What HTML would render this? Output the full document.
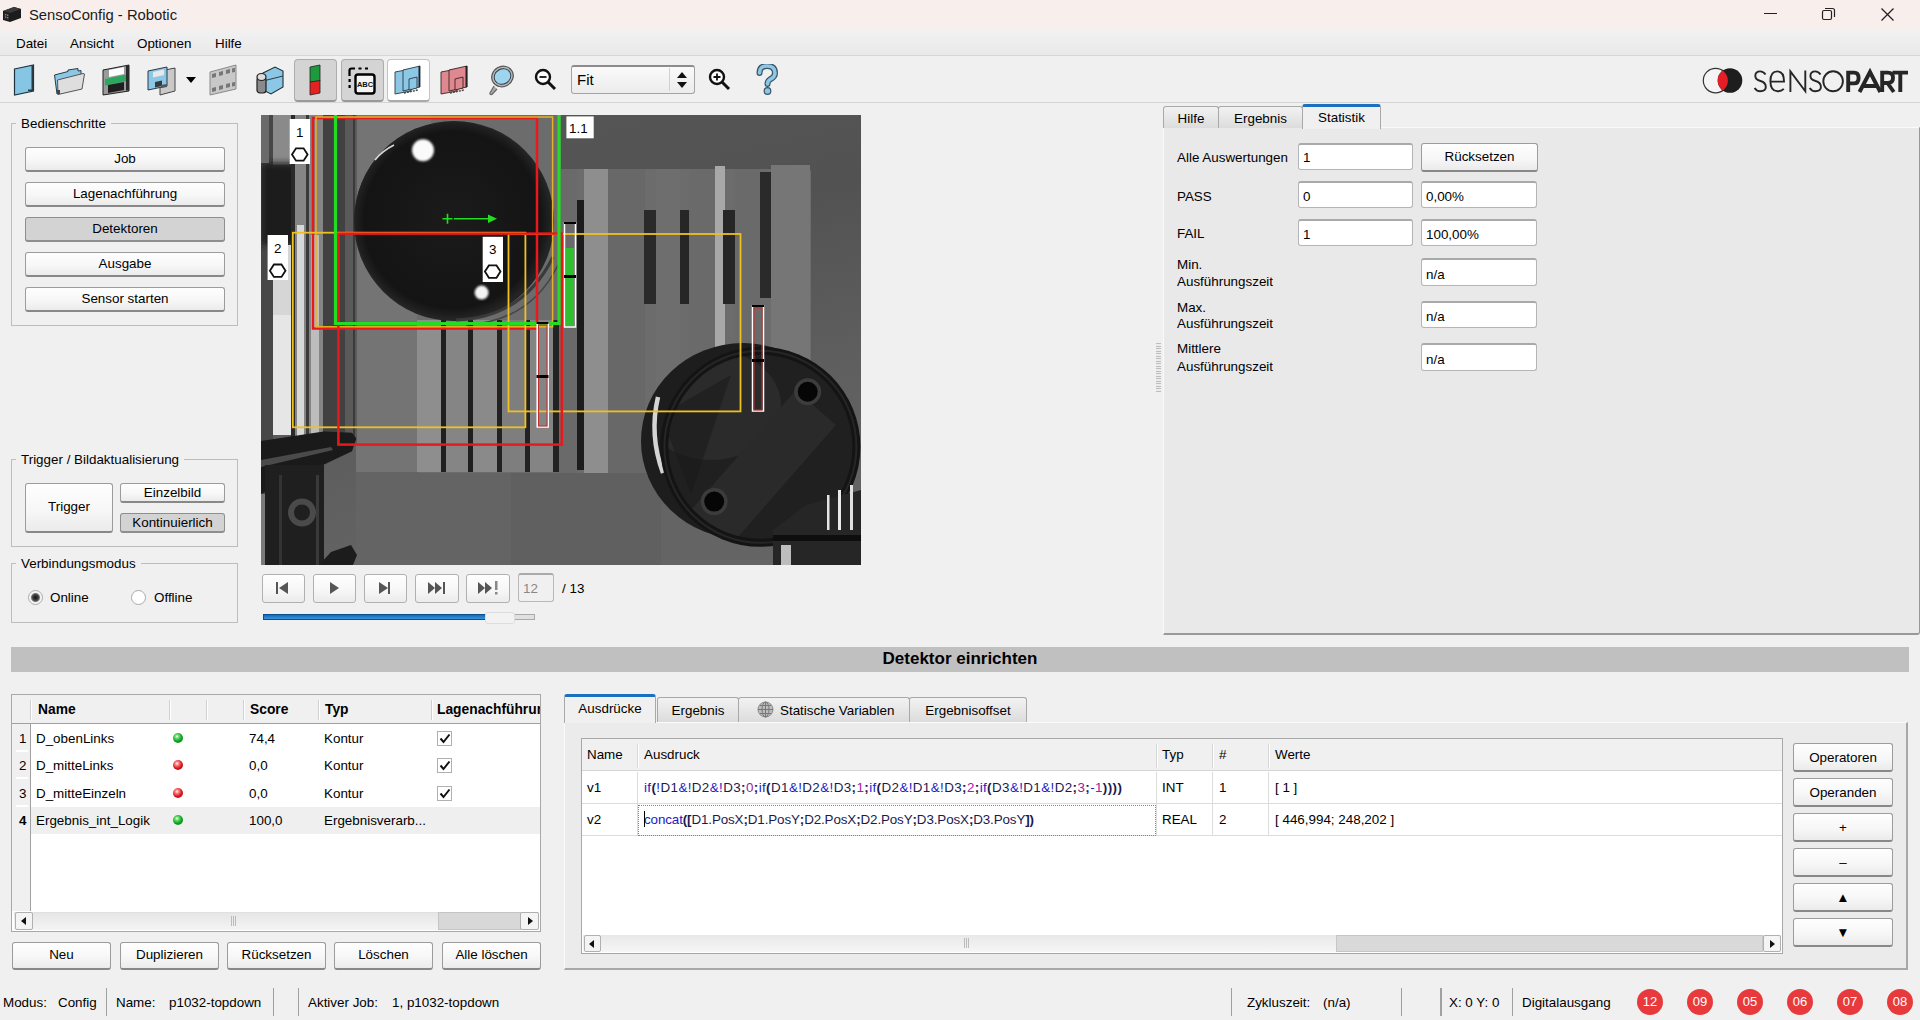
<!DOCTYPE html>
<html><head><meta charset="utf-8">
<style>
*{margin:0;padding:0;box-sizing:border-box}
html,body{width:1920px;height:1020px;overflow:hidden;background:#f0f0f0;font-family:"Liberation Sans",sans-serif;font-size:13.4px;color:#000;position:relative}
.a{position:absolute}
.t{position:absolute;white-space:nowrap;line-height:16px}
.btn{position:absolute;border:1px solid #9c9c9c;border-bottom:2px solid #888;border-radius:3px;background:linear-gradient(#fefefe,#f7f7f7 55%,#ebebeb);text-align:center;white-space:nowrap;line-height:16px}
.btn.p{background:#d3d3d3;border-color:#8e8e8e}
.grp{position:absolute;border:1px solid #bdbdbd}
.grp>.gt{position:absolute;top:-8px;left:4px;background:#f0f0f0;padding:0 5px;line-height:16px;white-space:nowrap}
.inp{position:absolute;background:#fff;border:1px solid #b5b5b5;border-top:2px solid #a9a9a9;border-radius:3px;line-height:16px;padding-left:4px;white-space:nowrap}
.tab{position:absolute;border:1px solid #a8a8a8;border-bottom:none;border-radius:3px 3px 0 0;background:linear-gradient(#f2f2f2,#dcdcdc);text-align:center;white-space:nowrap;line-height:16px}
.vsep{position:absolute;width:1px;background:#d8d8d8}
</style></head><body>

<!-- title bar -->
<div class="a" style="left:0;top:0;width:1920px;height:29px;background:#f8efed"></div>
<svg class="a" style="left:2px;top:5px" width="20" height="18" viewBox="0 0 20 18"><polygon points="1,6 12,2 19,4 19,13 8,17 1,15" fill="#1c1c1c"/><polygon points="1,6 12,2 19,4 8,8" fill="#3a3a3a"/><polygon points="2,7.5 7,9 7,15.5 2,14" fill="#2a2a2a"/><g fill="#8a8a8a"><rect x="3" y="9" width="1.3" height="1.3"/><rect x="5" y="9.6" width="1.3" height="1.3"/><rect x="3" y="11.5" width="1.3" height="1.3"/><rect x="5" y="12" width="1.3" height="1.3"/></g></svg>
<div class="t" style="left:29px;top:6px;font-size:14.8px;line-height:18px;color:#1a1a1a">SensoConfig - Robotic</div>
<div class="a" style="left:1764px;top:13px;width:13px;height:1px;background:#222"></div>
<svg class="a" style="left:1821px;top:7px" width="15" height="14" viewBox="0 0 15 14"><rect x="1.5" y="3.5" width="9" height="9" rx="1.5" fill="none" stroke="#222" stroke-width="1.2"/><path d="M4 1.5 H11.5 Q13.5 1.5 13.5 3.5 V10" fill="none" stroke="#222" stroke-width="1.2"/></svg>
<svg class="a" style="left:1880px;top:7px" width="15" height="15" viewBox="0 0 15 15"><path d="M1.5 1.5 L13.5 13.5 M13.5 1.5 L1.5 13.5" stroke="#222" stroke-width="1.3"/></svg>

<!-- menu bar -->
<div class="a" style="left:0;top:29px;width:1920px;height:26px;background:linear-gradient(#f2f2f2,#e9e9e9)"></div>
<div class="a" style="left:0;top:55px;width:1920px;height:1px;background:#d6d6d6"></div>
<div class="t" style="left:16px;top:36px">Datei</div>
<div class="t" style="left:70px;top:36px">Ansicht</div>
<div class="t" style="left:137px;top:36px">Optionen</div>
<div class="t" style="left:215px;top:36px">Hilfe</div>

<!-- toolbar -->
<div class="a" style="left:0;top:56px;width:1920px;height:46px;background:#f0f0f0"></div>
<div class="a" style="left:0;top:102px;width:1920px;height:1px;background:#d4d4d4"></div>

<!-- 1 new -->
<svg class="a" style="left:13px;top:64px" width="22" height="32" viewBox="0 0 22 32"><polygon points="1.5,5 20.5,1 20.5,27 1.5,31" fill="#86c5e4" stroke="#1e3440" stroke-width="1.2"/><rect x="18.5" y="1.5" width="2" height="25.5" fill="#2a3a44"/><rect x="15" y="25.5" width="4" height="1.5" fill="#2a3a44"/></svg>
<!-- 2 open -->
<svg class="a" style="left:53px;top:68px" width="33" height="27" viewBox="0 0 33 27"><polygon points="1.5,7 15,3.5 15,2 25,0.5 25,3 28,2.5 28,20 4,26" fill="#8cc8e6" stroke="#2a3a44" stroke-width="1"/><polygon points="4.5,12 30,5.5 31.5,6 29,21 5,26.5" fill="#dedede" stroke="#555" stroke-width="1"/><rect x="4" y="22" width="3" height="4" fill="#444"/></svg>
<!-- 3 save green -->
<svg class="a" style="left:102px;top:64px" width="28" height="32" viewBox="0 0 28 32"><polygon points="1,6 27,1 27,27 1,31" fill="#9a9a9a" stroke="#222" stroke-width="1"/><polygon points="7,6 22,3 22,10 7,13" fill="#fff"/><polygon points="3,15 25,10.5 25,17 3,21.5" fill="#2aa860"/><polygon points="6,21 22,18 22,26 6,29" fill="#1f1f1f"/><rect x="24" y="1.5" width="3" height="25" fill="#2a2a2a"/></svg>
<!-- 4 save blue + dropdown -->
<svg class="a" style="left:147px;top:64px" width="31" height="32" viewBox="0 0 31 32"><polygon points="13,7 28,4 28,27 13,31" fill="#c9c9c9" stroke="#444" stroke-width="1"/><polygon points="1,7 20,3 20,22 1,26" fill="#8cc8e6" stroke="#2a3a44" stroke-width="1"/><polygon points="6,8 17,5.5 17,11 6,13.5" fill="#e8e8e8"/><polygon points="8,18 15,16.5 15,22 8,23.5" fill="#3a3a3a"/><polygon points="14,21 20,20 20,23 14,24" fill="#555"/></svg>
<svg class="a" style="left:185px;top:76px" width="12" height="8"><polygon points="1,1 11,1 6,7" fill="#000"/></svg>
<!-- 5 film -->
<svg class="a" style="left:209px;top:64px" width="29" height="32" viewBox="0 0 29 32"><polygon points="1,8 27,1 27,25 1,31" fill="#c8c8c8" stroke="#8a8a8a" stroke-width="1"/><g fill="#777"><polygon points="3,10 7,9 7,13 3,14"/><polygon points="10,8 14,7 14,11 10,12"/><polygon points="17,6 21,5 21,9 17,10"/><polygon points="23,4.5 26,3.8 26,8 23,8.6"/><polygon points="3,24 7,23 7,27 3,28"/><polygon points="10,22 14,21 14,25 10,26"/><polygon points="17,20 21,19 21,23 17,24"/><polygon points="23,18.5 26,18 26,22 23,22.6"/></g></svg>
<!-- 6 camera -->
<svg class="a" style="left:255px;top:64px" width="30" height="32" viewBox="0 0 30 32"><polygon points="8,9 20,3 28,7 28,23 16,30 8,26" fill="#8cc8e6" stroke="#1e2e38" stroke-width="1.1"/><path d="M8 17 L28 12" stroke="#2a3a44" stroke-width="1"/><rect x="2" y="13" width="9" height="16" rx="3" fill="#8a8a8a" stroke="#1f1f1f" stroke-width="1.2"/><ellipse cx="6.5" cy="13" rx="4.5" ry="3.5" fill="#ddd" stroke="#1f1f1f" stroke-width="1.2"/></svg>
<!-- 7 pressed trigger -->
<div class="a" style="left:294px;top:59px;width:43px;height:43px;background:#d4d4d4;border:1px solid #adadad;border-bottom:2px solid #999;border-radius:4px"></div>
<svg class="a" style="left:308px;top:64px" width="14" height="32" viewBox="0 0 14 32"><polygon points="2,3 12,1 12,17 2,18" fill="#1e9a3e" stroke="#222" stroke-width="0.8"/><polygon points="2,18 12,16.5 12,29 2,31" fill="#e52222" stroke="#222" stroke-width="0.8"/></svg>
<!-- 8 pressed ABC -->
<div class="a" style="left:341px;top:59px;width:43px;height:43px;background:#d4d4d4;border:1px solid #adadad;border-bottom:2px solid #999;border-radius:4px"></div>
<svg class="a" style="left:347px;top:66px" width="30" height="30" viewBox="0 0 30 30"><path d="M2.5 10 V4.5 Q2.5 2.5 4.5 2.5 H8 M11.5 2.5 H14.5 M18 2.5 H21" stroke="#000" stroke-width="2.2" fill="none" stroke-dasharray="none"/><rect x="1.5" y="13" width="2.2" height="3" fill="#000"/><rect x="1.5" y="19" width="2.2" height="3" fill="#000"/><rect x="8.5" y="8.5" width="19" height="19" rx="2.5" fill="#f4f4f4" stroke="#000" stroke-width="2.4"/><text x="18" y="21" font-family="Liberation Sans" font-size="7.5" font-weight="bold" text-anchor="middle" fill="#111">ABC</text></svg>
<!-- 9 white raised -->
<div class="a" style="left:387px;top:59px;width:43px;height:43px;background:#fff;border:1px solid #c4c4c4;border-bottom:2px solid #aaa;border-radius:4px"></div>
<svg class="a" style="left:394px;top:64px" width="30" height="32" viewBox="0 0 30 32"><polygon points="1,8 17,5 17,27 1,30" fill="#8cc8e6" stroke="#2a3a44" stroke-width="0.9"/><polygon points="9,6 26,2 26,23 9,27" fill="#8cc8e6" stroke="#2a3a44" stroke-width="0.9"/><polygon points="15,15 23,13 23,24 15,26" fill="#8cc8e6" stroke="#2a3a44" stroke-width="0.9"/><rect x="24.5" y="2" width="1.5" height="21" fill="#223"/><path d="M10 29 L24 26" stroke="#444" stroke-width="1.5" stroke-dasharray="2 1"/></svg>
<!-- 10 pink -->
<svg class="a" style="left:440px;top:64px" width="30" height="32" viewBox="0 0 30 32"><polygon points="1,8 17,5 17,27 1,30" fill="#e08890" stroke="#3a2222" stroke-width="0.9"/><polygon points="9,6 27,2 27,23 9,27" fill="#e08890" stroke="#3a2222" stroke-width="0.9"/><polygon points="15,15 23,13 23,24 15,26" fill="#e08890" stroke="#3a2222" stroke-width="0.9"/><rect x="25.5" y="2" width="1.8" height="21" fill="#222"/><path d="M10 29 L24 26" stroke="#444" stroke-width="1.5" stroke-dasharray="2 1"/></svg>
<!-- 11 lens -->
<svg class="a" style="left:487px;top:64px" width="28" height="32" viewBox="0 0 28 32"><path d="M7 22 L3 29 Q2.5 31 5 30.5 L10 25" fill="#aaa" stroke="#666" stroke-width="1.2"/><ellipse cx="15.5" cy="12.5" rx="11" ry="10" transform="rotate(-30 15.5 12.5)" fill="#b8b8b8" stroke="#555" stroke-width="1.2"/><ellipse cx="15.5" cy="12.5" rx="8.5" ry="7.5" transform="rotate(-30 15.5 12.5)" fill="#9fd4ee" stroke="#2a3a44" stroke-width="0.9"/></svg>
<!-- 12 zoom out -->
<svg class="a" style="left:534px;top:68px" width="24" height="24" viewBox="0 0 24 24"><circle cx="9" cy="9" r="7" fill="#fff" stroke="#111" stroke-width="2.4"/><path d="M5.5 9 H12.5" stroke="#111" stroke-width="1.8"/><path d="M14 14 L21 21" stroke="#111" stroke-width="3"/></svg>
<!-- 13 combo -->
<div class="a" style="left:571px;top:65px;width:124px;height:29px;border:1px solid #a4a4a4;border-top:2px solid #8c8c8c;border-radius:3px;background:linear-gradient(#fafafa,#ececec)"></div>
<div class="a" style="left:669px;top:68px;width:1px;height:23px;background:#d0d0d0"></div>
<div class="t" style="left:577px;top:72px;font-size:15px">Fit</div>
<svg class="a" style="left:676px;top:71px" width="12" height="18"><polygon points="6,1 11,7 1,7" fill="#111"/><polygon points="1,11 11,11 6,17" fill="#111"/></svg>
<!-- 14 zoom in -->
<svg class="a" style="left:708px;top:68px" width="24" height="24" viewBox="0 0 24 24"><circle cx="9" cy="9" r="7" fill="#fff" stroke="#111" stroke-width="2.4"/><path d="M5.5 9 H12.5 M9 5.5 V12.5" stroke="#111" stroke-width="1.8"/><path d="M14 14 L21 21" stroke="#111" stroke-width="3"/></svg>
<!-- 15 help -->
<svg class="a" style="left:756px;top:64px" width="22" height="32" viewBox="0 0 22 32"><path d="M3.5 9 Q3.5 2 11 2 Q19 2 19 9 Q19 13 14 15.5 Q11.5 17 11.5 20" fill="none" stroke="#3a5566" stroke-width="6" stroke-linecap="round"/><path d="M3.5 9 Q3.5 2 11 2 Q19 2 19 9 Q19 13 14 15.5 Q11.5 17 11.5 20" fill="none" stroke="#8cc8e6" stroke-width="3.6" stroke-linecap="round"/><circle cx="11.5" cy="27" r="3.3" fill="#8cc8e6" stroke="#3a5566" stroke-width="1.2"/></svg>


<!-- logo -->

<svg class="a" style="left:1700px;top:62px" width="212" height="36" viewBox="0 0 212 36">
 <defs><clipPath id="lc"><circle cx="30" cy="18.5" r="12.3"/></clipPath></defs>
 <circle cx="15.6" cy="18.6" r="12.3" fill="#f4f4f4" stroke="#333" stroke-width="1.2"/>
 <circle cx="30" cy="18.5" r="12.3" fill="#1e1e1e"/>
 <circle cx="15.6" cy="18.6" r="12.3" fill="#e41e26" clip-path="url(#lc)"/>
 <g fill="none" stroke="#262626" stroke-width="1.9" stroke-linecap="butt">
  <path d="M65.5 12.5 Q63.5 9.4 60.2 9.4 Q55.3 9.4 55.3 14 Q55.3 17.6 60.5 19 Q65.8 20.4 65.8 25 Q65.8 29.2 60.2 29.2 Q56.4 29.2 54.6 26"/>
  <path d="M70.7 19.6 H84 Q84 9.4 77.3 9.4 Q70.4 9.4 70.4 19.3 Q70.4 29.2 77.6 29.2 Q81.4 29.2 83.8 26.8"/>
  <path d="M90.4 30 V9.4 L105.3 29.2 V8.6"/>
  <path d="M120.5 12.5 Q118.5 9.4 115.3 9.4 Q110.4 9.4 110.4 14 Q110.4 17.6 115.6 19 Q120.9 20.4 120.9 25 Q120.9 29.2 115.3 29.2 Q111.5 29.2 109.7 26"/>
  <ellipse cx="133.1" cy="19.3" rx="9.8" ry="10"/>
 </g>
 <g fill="none" stroke="#262626" stroke-width="3.9" stroke-linecap="butt" stroke-linejoin="miter">
  <path d="M148.2 30 V10.6 H154 Q158.6 10.6 158.6 16 Q158.6 21.4 154 21.4 H148.2"/>
  <path d="M159.5 30 L170 10 L180.3 30 M164 24 H176"/>
  <path d="M182.2 30 V10.6 H187.8 Q193 10.6 193 15.8 Q193 21 187.8 21 H182.2 M187.5 21 L193.8 30"/>
  <path d="M192.5 10.6 H208 M200.3 10.6 V30"/>
 </g>
</svg>


<!-- left panel -->
<div class="grp" style="left:11px;top:123px;width:227px;height:203px"><div class="gt">Bedienschritte</div></div>
<div class="btn" style="left:25px;top:147px;width:200px;height:25px;line-height:21px">Job</div>
<div class="btn" style="left:25px;top:182px;width:200px;height:25px;line-height:21px">Lagenachführung</div>
<div class="btn p" style="left:25px;top:217px;width:200px;height:25px;line-height:21px">Detektoren</div>
<div class="btn" style="left:25px;top:252px;width:200px;height:25px;line-height:21px">Ausgabe</div>
<div class="btn" style="left:25px;top:287px;width:200px;height:25px;line-height:21px">Sensor starten</div>

<div class="grp" style="left:11px;top:459px;width:227px;height:88px"><div class="gt">Trigger / Bildaktualisierung</div></div>
<div class="btn" style="left:25px;top:483px;width:88px;height:50px;line-height:46px">Trigger</div>
<div class="btn" style="left:120px;top:483px;width:105px;height:20px;line-height:17px">Einzelbild</div>
<div class="btn p" style="left:120px;top:513px;width:105px;height:20px;line-height:17px">Kontinuierlich</div>

<div class="grp" style="left:11px;top:563px;width:227px;height:60px"><div class="gt">Verbindungsmodus</div></div>
<div class="a" style="left:28px;top:590px;width:15px;height:15px;border-radius:50%;border:1px solid #aaa;background:radial-gradient(circle at 50% 50%,#111 0,#444 3px,#777 4px,#eee 5px,#fff 7px)"></div>
<div class="t" style="left:50px;top:590px">Online</div>
<div class="a" style="left:131px;top:590px;width:15px;height:15px;border-radius:50%;border:1px solid #aaa;background:#fff"></div>
<div class="t" style="left:154px;top:590px">Offline</div>

<!-- image -->
<svg class="a" style="left:261px;top:115px" width="600" height="450" viewBox="0 0 600 450">
<defs>
 <linearGradient id="bgG" x1="0" y1="0" x2="0.3" y2="1"><stop offset="0" stop-color="#575757"/><stop offset="0.4" stop-color="#525252"/><stop offset="0.75" stop-color="#5e5e5e"/><stop offset="1" stop-color="#646464"/></linearGradient>
 <radialGradient id="barT" cx="0.5" cy="0.5" r="0.5"><stop offset="0" stop-color="#1b1b1b"/><stop offset="0.9" stop-color="#141414"/><stop offset="1" stop-color="#222"/></radialGradient>
 <linearGradient id="brB" x1="0" y1="0" x2="1" y2="1"><stop offset="0" stop-color="#2a2a2a"/><stop offset="1" stop-color="#202020"/></linearGradient>
 <filter id="blur1"><feGaussianBlur stdDeviation="1.2"/></filter>
 <filter id="blur3"><feGaussianBlur stdDeviation="3"/></filter>
</defs>
<rect width="600" height="450" fill="url(#bgG)"/>
<!-- floor lighter area bottom middle -->
<rect x="95" y="357" width="155" height="93" fill="#646464"/>
<rect x="250" y="357" width="150" height="93" fill="#606060"/>
<!-- area left of barrel, lighter wall -->
<rect x="95" y="0" width="80" height="357" fill="#747474"/>
<rect x="170" y="0" width="130" height="60" fill="#6c6c6c"/>
<rect x="84" y="0" width="12" height="330" fill="#5a5a5a"/>
<rect x="92" y="0" width="2" height="330" fill="#3a3a3a"/>
<!-- left structure -->
<rect x="0" y="0" width="12" height="450" fill="#474747"/>
<rect x="12" y="0" width="18" height="50" fill="#8a8a8a"/>
<rect x="0" y="48" width="44" height="82" fill="#1d1d1d" filter="url(#blur3)"/>
<rect x="12" y="130" width="18" height="190" fill="#d6d6d6"/>
<rect x="12" y="200" width="18" height="120" fill="#e6e6e6"/>
<rect x="30" y="0" width="32" height="325" fill="#858585"/>
<rect x="30" y="0" width="4" height="325" fill="#2a2a2a"/>
<rect x="36" y="110" width="7" height="215" fill="#d8d8d8"/>
<rect x="45" y="0" width="3" height="325" fill="#3a3a3a"/>
<rect x="50" y="120" width="8" height="205" fill="#bdbdbd"/>
<rect x="0" y="0" width="8" height="48" fill="#6a6a6a"/>
<rect x="62" y="0" width="22" height="330" fill="#414141"/>
<!-- beam and machinery bottom left -->
<polygon points="0,326 62.6,316.4 91,317.8 95.3,323.5 91,336.3 61,350.5 0,379" fill="#1a1a1a"/>
<polygon points="0,345 70,332 72,335 0,352" fill="#4a4a4a"/>
<rect x="4" y="350" width="59" height="100" fill="#1f1f1f"/>
<rect x="0" y="379" width="4" height="71" fill="#7a7a7a"/>
<circle cx="41" cy="397.5" r="11" fill="none" stroke="#4a4a4a" stroke-width="6"/>
<rect x="18" y="360" width="3" height="90" fill="#333"/>
<rect x="55" y="360" width="3" height="90" fill="#3a3a3a"/>
<polygon points="58,450 70,437 90,430 96,440 92,450" fill="#1c1c1c"/>
<!-- pallet -->
<g>
 <rect x="156" y="54" width="394" height="304" rx="3" fill="#6c6c6c"/>
 <rect x="156" y="205" width="24" height="152" fill="#8e8e8e"/>
 <rect x="180" y="205" width="5" height="152" fill="#1f1f1f"/>
 <rect x="185" y="205" width="22" height="152" fill="#858585"/>
 <rect x="207" y="205" width="5" height="152" fill="#1f1f1f"/>
 <rect x="212" y="205" width="24" height="152" fill="#8a8a8a"/>
 <rect x="236" y="205" width="5" height="152" fill="#222"/>
 <rect x="241" y="205" width="23" height="152" fill="#7e7e7e"/>
 <rect x="264" y="205" width="5" height="152" fill="#222"/>
 <rect x="269" y="205" width="24" height="152" fill="#848484"/>
 <rect x="292" y="205" width="6" height="152" fill="#222"/>
 <rect x="298" y="54" width="18" height="304" fill="#6a6a6a"/>
 <rect x="316" y="85" width="7" height="270" fill="#1c1c1c"/>
 <rect x="323" y="54" width="24" height="304" fill="#8e8e8e"/>
 <rect x="347" y="54" width="37" height="304" fill="#686868"/>
 <rect x="383" y="95" width="12" height="94" fill="#2a2a2a"/>
 <rect x="395" y="54" width="24" height="304" fill="#6e6e6e"/>
 <rect x="419" y="95" width="9" height="94" fill="#262626"/>
 <rect x="428" y="54" width="26" height="304" fill="#6a6a6a"/>
 <rect x="454" y="51" width="10" height="250" fill="#a8a8a8"/>
 <rect x="462" y="95" width="12" height="94" fill="#262626"/>
 <rect x="474" y="54" width="25" height="304" fill="#6a6a6a"/>
 <rect x="499" y="57" width="11" height="126" fill="#2a2a2a"/>
 <rect x="510" y="50" width="39" height="300" fill="#767676"/>
</g>
<!-- top barrel -->
<ellipse cx="193" cy="106" rx="100" ry="100" fill="#242424"/>
<circle cx="191.5" cy="104.8" r="98" fill="url(#barT)"/>
<path d="M114 45 Q121 36 133 30" stroke="#d8d8d8" stroke-width="1.6" fill="none"/>
<path d="M195 205 Q262 203 292 142" stroke="#3a3a3a" stroke-width="3" fill="none"/><path d="M205 210 Q270 206 297 150" stroke="#444" stroke-width="1.5" fill="none"/>
<circle cx="162" cy="35.3" r="11" fill="#fafafa" filter="url(#blur1)"/>
<circle cx="220.6" cy="177.6" r="7" fill="#f4f4f4" filter="url(#blur1)"/>
<!-- bottom right barrel -->
<clipPath id="lidClip"><circle cx="499.4" cy="331.8" r="92"/></clipPath>
<ellipse cx="482" cy="326" rx="102" ry="98" fill="#1d1d1d"/>
<path d="M397 282 Q388 320 402 358" stroke="#d4d4d4" stroke-width="4.5" fill="none"/>
<circle cx="499.4" cy="331.8" r="100" fill="#141414"/>
<circle cx="499.4" cy="331.8" r="96" fill="none" stroke="#262626" stroke-width="2"/>
<circle cx="499.4" cy="331.8" r="92" fill="#202020"/>
<g clip-path="url(#lidClip)">
 <ellipse cx="450" cy="290" rx="70" ry="55" fill="#2b2b2b"/>
 <polygon points="430,395 535,275 575,310 470,430" fill="#2a2a2a"/>
 <polygon points="400,300 470,260 430,380" fill="#1a1a1a" opacity="0.6"/>
</g>
<circle cx="546.7" cy="276.7" r="13.5" fill="#3c3c3c"/><circle cx="546.7" cy="276.7" r="10" fill="#060606"/>
<circle cx="453.2" cy="386.6" r="13.5" fill="#3c3c3c"/><circle cx="453.2" cy="386.6" r="10" fill="#060606"/>
<!-- bottom right machinery -->
<polygon points="512,450 512,415 545,390 600,375 600,450" fill="#262626"/>
<rect x="566" y="380" width="2.5" height="35" fill="#e4e4e4"/>
<rect x="577" y="375" width="3" height="40" fill="#eaeaea"/>
<rect x="589" y="370" width="3" height="45" fill="#e0e0e0"/>
<rect x="512" y="420" width="88" height="6" fill="#0e0e0e"/>
<rect x="520" y="430" width="10" height="20" fill="#bdbdbd"/>
<!-- overlays -->
<g fill="none">
 <rect x="52" y="3" width="224" height="210.5" stroke="#e8191c" stroke-width="2.5"/>
 <rect x="55" y="2" width="236.6" height="209.8" stroke="#e4b224" stroke-width="1.5"/>
 <rect x="31.8" y="117.7" width="232.6" height="194.6" stroke="#f0c020" stroke-width="1.8"/>
 <rect x="247.5" y="119" width="232" height="177.4" stroke="#f0c020" stroke-width="1.8"/>
 <rect x="77.4" y="118.6" width="223.4" height="211" stroke="#e8191c" stroke-width="2.5"/>
 <path d="M74.5 0 V208.5 H298 V0" stroke="#22dd22" stroke-width="3.2"/>
</g>
<!-- probes -->
<rect x="303.5" y="108" width="11" height="104" fill="none" stroke="#fff" stroke-width="1.5"/>
<rect x="305" y="133" width="8" height="78" fill="#2fbf2f"/>
<rect x="303" y="107" width="12" height="2" fill="#000"/>
<rect x="303" y="160" width="12" height="3" fill="#000"/>
<rect x="276.2" y="208" width="11" height="104" fill="none" stroke="#fff" stroke-width="1.5"/>
<rect x="277.5" y="210" width="8.5" height="101" fill="none" stroke="#c03030" stroke-width="1"/>
<rect x="275.5" y="207" width="12" height="2" fill="#000"/>
<rect x="275.5" y="260" width="12" height="3" fill="#000"/>
<rect x="491.5" y="191" width="11" height="105" fill="none" stroke="#fff" stroke-width="1.5"/>
<rect x="493" y="193" width="8" height="102" fill="none" stroke="#c03030" stroke-width="1"/>
<rect x="491" y="190" width="12" height="2" fill="#000"/>
<rect x="491" y="244" width="12" height="3" fill="#000"/>
<!-- green arrow -->
<path d="M181.5 103.7 H191.5 M186.5 98.7 V108.7 M193 103.7 H229" stroke="#22dd22" stroke-width="1.6"/>
<polygon points="227,99.5 236,103.7 227,108" fill="#22dd22"/>
<!-- labels -->
<rect x="28.7" y="4" width="20.3" height="45" fill="#fff"/>
<rect x="6.6" y="120" width="20.4" height="45" fill="#fff"/>
<rect x="221.7" y="121.8" width="20.3" height="45.2" fill="#fff"/>
<rect x="305.4" y="1.4" width="27.3" height="21.9" fill="#fff"/>
<g font-family="Liberation Sans" font-size="13.4" fill="#000" text-anchor="middle">
 <text x="38.8" y="22">1</text><text x="16.8" y="138">2</text><text x="231.8" y="138.5">3</text>
</g>
<text x="308" y="18" font-family="Liberation Sans" font-size="13.4" fill="#000">1.1</text>
<g fill="none" stroke="#111" stroke-width="1.8">
 <polygon points="31,39.5 35,33.3 42.6,33.3 46.6,39.5 42.6,45.7 35,45.7"/>
 <polygon points="8.9,155.7 12.9,149.5 20.5,149.5 24.5,155.7 20.5,161.9 12.9,161.9"/>
 <polygon points="223.9,156.6 227.9,150.4 235.5,150.4 239.5,156.6 235.5,162.8 227.9,162.8"/>
</g>
</svg>


<!-- player -->

<div class="btn" style="left:262px;top:574px;width:43px;height:29px;border-bottom-width:1px;border-color:#b0b0b0"></div>
<svg class="a" style="left:275px;top:581px" width="16" height="14"><rect x="1" y="1" width="2" height="12" fill="#555"/><polygon points="4,7 13,1 13,13" fill="#555"/></svg>
<div class="btn" style="left:313px;top:574px;width:43px;height:29px;border-bottom-width:1px;border-color:#b0b0b0"></div>
<svg class="a" style="left:328px;top:581px" width="16" height="14"><polygon points="2,1 11,7 2,13" fill="#555"/></svg>
<div class="btn" style="left:364px;top:574px;width:43px;height:29px;border-bottom-width:1px;border-color:#b0b0b0"></div>
<svg class="a" style="left:377px;top:581px" width="16" height="14"><polygon points="2,1 11,7 2,13" fill="#555"/><rect x="11" y="1" width="2" height="12" fill="#555"/></svg>
<div class="btn" style="left:415px;top:574px;width:44px;height:29px;border-bottom-width:1px;border-color:#b0b0b0"></div>
<svg class="a" style="left:427px;top:581px" width="20" height="14"><polygon points="1,1 8,7 1,13" fill="#555"/><polygon points="8,1 15,7 8,13" fill="#555"/><rect x="16" y="1" width="2" height="12" fill="#555"/></svg>
<div class="btn" style="left:466px;top:574px;width:44px;height:29px;border-bottom-width:1px;border-color:#b0b0b0"></div>
<svg class="a" style="left:477px;top:581px" width="22" height="14"><polygon points="1,1 8,7 1,13" fill="#555"/><polygon points="8,1 15,7 8,13" fill="#555"/><rect x="18" y="0" width="2.5" height="9" fill="#888"/><rect x="18" y="11" width="2.5" height="2.5" fill="#888"/></svg>
<div class="a" style="left:518px;top:573px;width:36px;height:29px;border:1px solid #b8b8b8;border-top:2px solid #aaa;border-radius:3px;background:#f0f0f0"></div>
<div class="t" style="left:523px;top:581px;color:#888">12</div>
<div class="t" style="left:562px;top:581px">/ 13</div>
<div class="a" style="left:263px;top:614px;width:224px;height:6px;background:linear-gradient(#1768b5,#3a95e0);border:1px solid #0d4f8c"></div>
<div class="a" style="left:514px;top:614px;width:21px;height:6px;background:#e0e0e0;border:1px solid #aaa"></div>
<div class="a" style="left:485px;top:612px;width:30px;height:12px;background:#f2f2f2;border-radius:3px;border:1px solid #ddd"></div>


<!-- right panel -->

<div class="a" style="left:1156px;top:343px;width:5px;height:49px;background:repeating-linear-gradient(#bdbdbd 0 1px,#ececec 1px 2.5px)"></div>
<div class="a" style="left:1163px;top:127px;width:757px;height:508px;background:#e9e9e9;border-left:1px solid #fafafa;border-top:1px solid #fafafa;border-right:1px solid #999;border-bottom:2px solid #999;border-bottom-right-radius:3px"></div>
<div class="tab" style="left:1163px;top:106px;width:56px;height:22px;padding-top:4px">Hilfe</div>
<div class="tab" style="left:1218px;top:106px;width:85px;height:22px;padding-top:4px">Ergebnis</div>
<div class="a" style="left:1302px;top:104px;width:79px;height:25px;background:#f0f0f0;border:1px solid #a8a8a8;border-top:3px solid #1a6fc0;border-bottom:none;border-radius:3px 3px 0 0;text-align:center;line-height:16px;padding-top:3px">Statistik</div>
<div class="t" style="left:1177px;top:150px">Alle Auswertungen</div>
<div class="inp" style="left:1298px;top:143px;width:115px;height:27px;padding-top:5px">1</div>
<div class="btn" style="left:1421px;top:143px;width:117px;height:29px;line-height:25px">Rücksetzen</div>
<div class="t" style="left:1177px;top:189px">PASS</div>
<div class="inp" style="left:1298px;top:181px;width:115px;height:27px;padding-top:6px">0</div>
<div class="inp" style="left:1421px;top:181px;width:116px;height:27px;padding-top:6px">0,00%</div>
<div class="t" style="left:1177px;top:226px">FAIL</div>
<div class="inp" style="left:1298px;top:219px;width:115px;height:27px;padding-top:6px">1</div>
<div class="inp" style="left:1421px;top:219px;width:116px;height:27px;padding-top:6px">100,00%</div>
<div class="t" style="left:1177px;top:257px">Min.</div>
<div class="t" style="left:1177px;top:274px">Ausführungszeit</div>
<div class="inp" style="left:1421px;top:258px;width:116px;height:28px;padding-top:7px">n/a</div>
<div class="t" style="left:1177px;top:300px">Max.</div>
<div class="t" style="left:1177px;top:316px">Ausführungszeit</div>
<div class="inp" style="left:1421px;top:301px;width:116px;height:27px;padding-top:6px">n/a</div>
<div class="t" style="left:1177px;top:341px">Mittlere</div>
<div class="t" style="left:1177px;top:359px">Ausführungszeit</div>
<div class="inp" style="left:1421px;top:343px;width:116px;height:28px;padding-top:7px">n/a</div>


<!-- detektor bar -->
<div class="a" style="left:11px;top:647px;width:1898px;height:25px;background:#c0c0c0"></div>
<div class="t" style="left:11px;top:649px;width:1898px;text-align:center;font-weight:bold;font-size:17px;line-height:20px;color:#000">Detektor einrichten</div>

<!-- bottom left table -->

<div class="a" style="left:11px;top:694px;width:530px;height:238px;background:#fff;border:1px solid #a8a8a8"></div>
<div class="a" style="left:12px;top:695px;width:528px;height:29px;background:#f0f0f0;border-bottom:1px solid #a0a0a0"></div>
<div class="a" style="left:12px;top:724px;width:19px;height:187px;background:#f0f0f0"></div>
<div class="a" style="left:30px;top:724px;width:1px;height:187px;background:#a0a0a0"></div>
<div class="vsep" style="left:30px;top:700px;height:20px;background:#d0d0d0"></div><div class="vsep" style="left:31px;top:700px;height:20px;background:#fff"></div><div class="vsep" style="left:169px;top:700px;height:20px;background:#d0d0d0"></div><div class="vsep" style="left:170px;top:700px;height:20px;background:#fff"></div><div class="vsep" style="left:206px;top:700px;height:20px;background:#d0d0d0"></div><div class="vsep" style="left:207px;top:700px;height:20px;background:#fff"></div><div class="vsep" style="left:243px;top:700px;height:20px;background:#d0d0d0"></div><div class="vsep" style="left:244px;top:700px;height:20px;background:#fff"></div><div class="vsep" style="left:318px;top:700px;height:20px;background:#d0d0d0"></div><div class="vsep" style="left:319px;top:700px;height:20px;background:#fff"></div><div class="vsep" style="left:431px;top:700px;height:20px;background:#d0d0d0"></div><div class="vsep" style="left:432px;top:700px;height:20px;background:#fff"></div><div class="t" style="left:38px;top:702px;font-weight:bold;font-size:13.8px">Name</div><div class="t" style="left:250px;top:702px;font-weight:bold;font-size:13.8px">Score</div><div class="t" style="left:325px;top:702px;font-weight:bold;font-size:13.8px">Typ</div><div class="a" style="left:431px;top:695px;width:109px;height:28px;overflow:hidden"><div class="t" style="left:6px;top:7px;font-weight:bold;font-size:13.8px">Lagenachführung</div></div><div class="a" style="left:16px;top:750px;width:12px;height:2px;background:#fff"></div><div class="t" style="left:19px;top:731px;">1</div><div class="t" style="left:36px;top:731px">D_obenLinks</div><div class="a" style="left:173px;top:733px;width:10px;height:10px;border-radius:50%;background:radial-gradient(circle at 40% 35%,#fff 0,#5fdc5f 2px,#0e9a22 5px)"></div><div class="t" style="left:249px;top:731px">74,4</div><div class="t" style="left:324px;top:731px">Kontur</div><div class="a" style="left:437px;top:731px;width:15px;height:15px;border:1px solid #b0b0b0;background:#fff"></div><svg class="a" style="left:439px;top:733px" width="12" height="11"><path d="M1.5 5.5 L4.5 9 L10.5 1.5" fill="none" stroke="#111" stroke-width="2"/></svg><div class="a" style="left:16px;top:777px;width:12px;height:2px;background:#fff"></div><div class="t" style="left:19px;top:758px;">2</div><div class="t" style="left:36px;top:758px">D_mitteLinks</div><div class="a" style="left:173px;top:760px;width:10px;height:10px;border-radius:50%;background:radial-gradient(circle at 40% 35%,#fff 0,#ff7a7a 2px,#d0131b 5px)"></div><div class="t" style="left:249px;top:758px">0,0</div><div class="t" style="left:324px;top:758px">Kontur</div><div class="a" style="left:437px;top:758px;width:15px;height:15px;border:1px solid #b0b0b0;background:#fff"></div><svg class="a" style="left:439px;top:760px" width="12" height="11"><path d="M1.5 5.5 L4.5 9 L10.5 1.5" fill="none" stroke="#111" stroke-width="2"/></svg><div class="a" style="left:16px;top:805px;width:12px;height:2px;background:#fff"></div><div class="t" style="left:19px;top:786px;">3</div><div class="t" style="left:36px;top:786px">D_mitteEinzeln</div><div class="a" style="left:173px;top:788px;width:10px;height:10px;border-radius:50%;background:radial-gradient(circle at 40% 35%,#fff 0,#ff7a7a 2px,#d0131b 5px)"></div><div class="t" style="left:249px;top:786px">0,0</div><div class="t" style="left:324px;top:786px">Kontur</div><div class="a" style="left:437px;top:786px;width:15px;height:15px;border:1px solid #b0b0b0;background:#fff"></div><svg class="a" style="left:439px;top:788px" width="12" height="11"><path d="M1.5 5.5 L4.5 9 L10.5 1.5" fill="none" stroke="#111" stroke-width="2"/></svg><div class="a" style="left:31px;top:807px;width:509px;height:27px;background:#efefef"></div><div class="t" style="left:19px;top:813px;font-weight:bold;">4</div><div class="t" style="left:36px;top:813px">Ergebnis_int_Logik</div><div class="a" style="left:173px;top:815px;width:10px;height:10px;border-radius:50%;background:radial-gradient(circle at 40% 35%,#fff 0,#5fdc5f 2px,#0e9a22 5px)"></div><div class="t" style="left:249px;top:813px">100,0</div><div class="t" style="left:324px;top:813px">Ergebnisverarb...</div>
<div class="a" style="left:14px;top:912px;width:525px;height:18px;background:linear-gradient(#e6e6e6,#f4f4f4);border-top:1px solid #e0e0e0"></div>
<div class="a" style="left:438px;top:912px;width:83px;height:18px;background:#d8d8d8;border:1px solid #c4c4c4"></div>
<div class="a" style="left:15px;top:912px;width:18px;height:18px;background:#f4f4f4;border:1px solid #b0b0b0;border-radius:2px"></div>
<svg class="a" style="left:20px;top:916px" width="8" height="10"><polygon points="6,1 1,5 6,9" fill="#111"/></svg>
<div class="a" style="left:520px;top:912px;width:19px;height:18px;background:#f4f4f4;border:1px solid #b0b0b0;border-radius:2px"></div>
<svg class="a" style="left:526px;top:916px" width="8" height="10"><polygon points="2,1 7,5 2,9" fill="#111"/></svg>
<div class="a" style="left:231px;top:916px;width:6px;height:10px;background:repeating-linear-gradient(90deg,#bbb 0 1px,transparent 1px 2px)"></div>
<div class="btn" style="left:12px;top:942px;width:99px;height:28px;line-height:23px">Neu</div><div class="btn" style="left:120px;top:942px;width:99px;height:28px;line-height:23px">Duplizieren</div><div class="btn" style="left:227px;top:942px;width:99px;height:28px;line-height:23px">Rücksetzen</div><div class="btn" style="left:334px;top:942px;width:99px;height:28px;line-height:23px">Löschen</div><div class="btn" style="left:442px;top:942px;width:99px;height:28px;line-height:23px">Alle löschen</div>

<!-- bottom right tabs -->

<div class="a" style="left:564px;top:722px;width:1344px;height:248px;background:#ebebeb;border-left:1px solid #fbfbfb;border-top:1px solid #fbfbfb;border-right:2px solid #a8a8a8;border-bottom:2px solid #a8a8a8"></div>
<div class="a" style="left:564px;top:694px;width:92px;height:29px;background:#f0f0f0;border:1px solid #a8a8a8;border-top:3px solid #1a6fc0;border-bottom:none;border-radius:3px 3px 0 0;text-align:center;line-height:16px;padding-top:4px">Ausdrücke</div>
<div class="tab" style="left:657px;top:697px;width:82px;height:25px;padding-top:5px">Ergebnis</div>
<div class="tab" style="left:738px;top:697px;width:172px;height:25px;padding-top:5px;text-align:left;padding-left:41px">Statische Variablen</div>
<svg class="a" style="left:757px;top:701px" width="17" height="17" viewBox="0 0 17 17"><circle cx="8.5" cy="8.5" r="7.5" fill="#bdbdbd" stroke="#8a8a8a"/><path d="M1 8.5 H16 M8.5 1 V16 M3 4.5 H14 M3 12.5 H14" stroke="#777" stroke-width="1" fill="none"/><ellipse cx="8.5" cy="8.5" rx="3.5" ry="7.5" fill="none" stroke="#777"/></svg>
<div class="tab" style="left:909px;top:697px;width:118px;height:25px;padding-top:5px">Ergebnisoffset</div>
<div class="a" style="left:581px;top:738px;width:1202px;height:216px;background:#fff;border:1px solid #a8a8a8"></div>
<div class="a" style="left:582px;top:739px;width:1200px;height:32px;background:#f0f0f0;border-bottom:1px solid #d6d6d6"></div>
<div class="vsep" style="left:637px;top:744px;height:24px;background:#d8d8d8"></div><div class="vsep" style="left:638px;top:744px;height:24px;background:#fff"></div><div class="vsep" style="left:1156px;top:744px;height:24px;background:#d8d8d8"></div><div class="vsep" style="left:1157px;top:744px;height:24px;background:#fff"></div><div class="vsep" style="left:1212px;top:744px;height:24px;background:#d8d8d8"></div><div class="vsep" style="left:1213px;top:744px;height:24px;background:#fff"></div><div class="vsep" style="left:1268px;top:744px;height:24px;background:#d8d8d8"></div><div class="vsep" style="left:1269px;top:744px;height:24px;background:#fff"></div><div class="t" style="left:587px;top:747px">Name</div><div class="t" style="left:644px;top:747px">Ausdruck</div><div class="t" style="left:1162px;top:747px">Typ</div><div class="t" style="left:1219px;top:747px">#</div><div class="t" style="left:1275px;top:747px">Werte</div><div class="a" style="left:582px;top:803px;width:1200px;height:1px;background:#dcdcdc"></div><div class="a" style="left:582px;top:835px;width:1200px;height:1px;background:#dcdcdc"></div><div class="a" style="left:637px;top:772px;width:1px;height:64px;background:#dcdcdc"></div><div class="a" style="left:1156px;top:772px;width:1px;height:64px;background:#dcdcdc"></div><div class="a" style="left:1212px;top:772px;width:1px;height:64px;background:#dcdcdc"></div><div class="a" style="left:1268px;top:772px;width:1px;height:64px;background:#dcdcdc"></div><div class="a" style="left:638px;top:805px;width:518px;height:31px;border:1px dotted #888"></div><div class="t" style="left:587px;top:780px">v1</div><div class="t" style="left:644px;top:780px;color:#1a1a50;letter-spacing:0.39px"><span style="color:#2020c8">if</span><b>(</b><span style="color:#2020c8">!</span>D1<span style="color:#2020c8">&amp;!</span>D2<span style="color:#2020c8">&amp;!</span>D3<b>;</b><span style="color:#a020a0">0</span><b>;</b><span style="color:#2020c8">if</span><b>(</b>D1<span style="color:#2020c8">&amp;!</span>D2<span style="color:#2020c8">&amp;!</span>D3<b>;</b><span style="color:#a020a0">1</span><b>;</b><span style="color:#2020c8">if</span><b>(</b>D2<span style="color:#2020c8">&amp;!</span>D1<span style="color:#2020c8">&amp;!</span>D3<b>;</b><span style="color:#a020a0">2</span><b>;</b><span style="color:#2020c8">if</span><b>(</b>D3<span style="color:#2020c8">&amp;!</span>D1<span style="color:#2020c8">&amp;!</span>D2<b>;</b><span style="color:#a020a0">3</span><b>;</b><span style="color:#2020c8">-</span><span style="color:#a020a0">1</span><b>))))</b></div><div class="t" style="left:1162px;top:780px">INT</div><div class="t" style="left:1219px;top:780px">1</div><div class="t" style="left:1275px;top:780px">[ 1 ]</div><div class="t" style="left:587px;top:812px">v2</div><div class="t" style="left:644px;top:812px;color:#1a1a50;letter-spacing:-0.12px"><span style="color:#2020c8">concat</span><b>([</b>D1.PosX<b>;</b>D1.PosY<b>;</b>D2.PosX<b>;</b>D2.PosY<b>;</b>D3.PosX<b>;</b>D3.PosY<b>])</b></div><div class="t" style="left:1162px;top:812px">REAL</div><div class="t" style="left:1219px;top:812px">2</div><div class="t" style="left:1275px;top:812px">[ 446,994; 248,202 ]</div><div class="a" style="left:644px;top:811px;width:1px;height:16px;background:#000"></div>
<div class="a" style="left:583px;top:935px;width:1198px;height:17px;background:linear-gradient(#e8e8e8,#f6f6f6)"></div>
<div class="a" style="left:1336px;top:935px;width:427px;height:17px;background:#d9d9d9;border:1px solid #c6c6c6"></div>
<div class="a" style="left:584px;top:935px;width:17px;height:17px;background:#f4f4f4;border:1px solid #b0b0b0;border-radius:2px"></div>
<svg class="a" style="left:588px;top:939px" width="8" height="10"><polygon points="6,1 1,5 6,9" fill="#111"/></svg>
<div class="a" style="left:1763px;top:935px;width:18px;height:17px;background:#f4f4f4;border:1px solid #b0b0b0;border-radius:2px"></div>
<svg class="a" style="left:1768px;top:939px" width="8" height="10"><polygon points="2,1 7,5 2,9" fill="#111"/></svg>
<div class="a" style="left:964px;top:938px;width:6px;height:10px;background:repeating-linear-gradient(90deg,#bbb 0 1px,transparent 1px 2px)"></div>
<div class="btn" style="left:1793px;top:743px;width:100px;height:29px;line-height:28px">Operatoren</div><div class="btn" style="left:1793px;top:778px;width:100px;height:29px;line-height:28px">Operanden</div><div class="btn" style="left:1793px;top:813px;width:100px;height:29px;line-height:28px">+</div><div class="btn" style="left:1793px;top:848px;width:100px;height:29px;line-height:28px">–</div><div class="btn" style="left:1793px;top:883px;width:100px;height:29px;line-height:28px">▲</div><div class="btn" style="left:1793px;top:918px;width:100px;height:29px;line-height:28px">▼</div>

<!-- status bar -->

<div class="t" style="left:3px;top:995px">Modus:</div><div class="t" style="left:58px;top:995px">Config</div>
<div class="a" style="left:106px;top:988px;width:1px;height:28px;background:#a0a0a0"></div>
<div class="t" style="left:116px;top:995px">Name:</div><div class="t" style="left:169px;top:995px">p1032-topdown</div>
<div class="a" style="left:273px;top:988px;width:1px;height:28px;background:#a0a0a0"></div>
<div class="a" style="left:298px;top:988px;width:1px;height:28px;background:#a0a0a0"></div>
<div class="t" style="left:308px;top:995px">Aktiver Job:</div><div class="t" style="left:392px;top:995px">1, p1032-topdown</div>
<div class="a" style="left:1231px;top:988px;width:1px;height:28px;background:#a0a0a0"></div>
<div class="t" style="left:1247px;top:995px">Zykluszeit:</div><div class="t" style="left:1323px;top:995px">(n/a)</div>
<div class="a" style="left:1401px;top:988px;width:1px;height:28px;background:#a0a0a0"></div>
<div class="a" style="left:1440px;top:988px;width:2px;height:28px;background:#a0a0a0"></div>
<div class="t" style="left:1449px;top:995px">X: 0 Y: 0</div>
<div class="a" style="left:1512px;top:988px;width:1px;height:28px;background:#a0a0a0"></div>
<div class="t" style="left:1522px;top:995px">Digitalausgang</div>
<div class="a" style="left:1637px;top:989px;width:26px;height:26px;border-radius:50%;background:#e83a3c;color:#fff;text-align:center;line-height:26px;font-size:13px">12</div><div class="a" style="left:1687px;top:989px;width:26px;height:26px;border-radius:50%;background:#e83a3c;color:#fff;text-align:center;line-height:26px;font-size:13px">09</div><div class="a" style="left:1737px;top:989px;width:26px;height:26px;border-radius:50%;background:#e83a3c;color:#fff;text-align:center;line-height:26px;font-size:13px">05</div><div class="a" style="left:1787px;top:989px;width:26px;height:26px;border-radius:50%;background:#e83a3c;color:#fff;text-align:center;line-height:26px;font-size:13px">06</div><div class="a" style="left:1837px;top:989px;width:26px;height:26px;border-radius:50%;background:#e83a3c;color:#fff;text-align:center;line-height:26px;font-size:13px">07</div><div class="a" style="left:1887px;top:989px;width:26px;height:26px;border-radius:50%;background:#e83a3c;color:#fff;text-align:center;line-height:26px;font-size:13px">08</div>

</body></html>
